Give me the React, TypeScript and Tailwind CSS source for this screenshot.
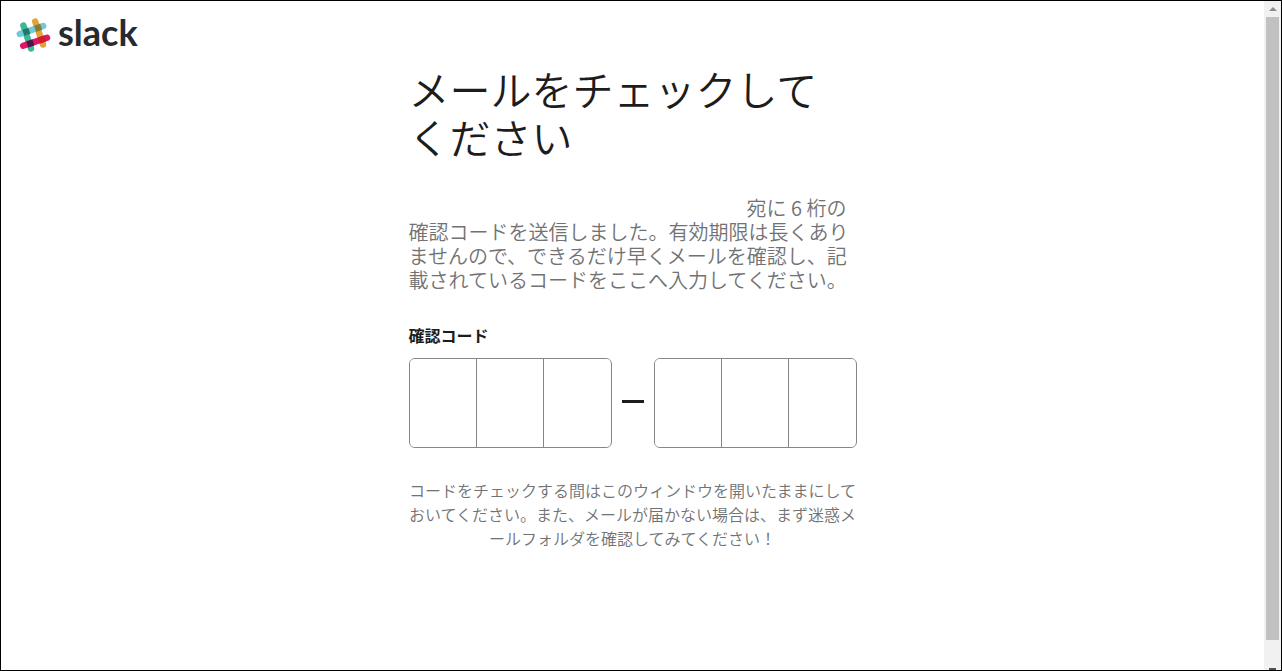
import React from "react";

function SlackMark() {
  return (
    <svg viewBox="0 0 36 38" className="h-[38px] w-9" aria-hidden="true">
      <g strokeWidth="6.4" strokeLinecap="round" fill="none">
        <path d="M7.4 10.5L15 33.5" stroke="#3eb890" />
        <path d="M19.2 6.5L27 29.5" stroke="#e3a336" />
        <path d="M3.8 19L27.2 11" stroke="#70cadb" />
        <path d="M7.2 30.8L31 22.8" stroke="#e01563" />
      </g>
      <path d="M6.2 14.8L12.3 12.7L14.4 18.8L8.3 20.9Z" fill="#1d7c69" />
      <path d="M18 10.8L24.1 8.7L26.2 14.8L20.1 16.9Z" fill="#877e2d" />
      <path d="M10.2 26.5L16.3 24.4L18.4 30.5L12.3 32.6Z" fill="#461b4e" />
      <path d="M22 22.5L28.1 20.4L30.2 26.5L24.1 28.6Z" fill="#cc2027" />
    </svg>
  );
}

function CodeGroup({ start }: { start: number }) {
  return (
    <div className="flex h-[90px] flex-1 divide-x divide-[#868686] overflow-hidden rounded-md border border-[#868686]">
      {[0, 1, 2].map((i) => (
        <input
          key={i}
          id={`code-${start + i}`}
          type="text"
          inputMode="numeric"
          maxLength={1}
          aria-label={`確認コード ${start + i}`}
          className="min-w-0 flex-1 bg-white text-center text-4xl text-[#1d1c1d] outline-none"
        />
      ))}
    </div>
  );
}

function ScrollTrack() {
  return (
    <div className="flex w-[17px] shrink-0 flex-col items-center bg-[#f1f1f1]" aria-hidden="true">
      <div className="flex h-4 items-center">
        <svg viewBox="0 0 8 4" className="h-1 w-2">
          <path d="M4 0L8 4H0Z" fill="#8c8c8c" />
        </svg>
      </div>
      <div className="w-[13px] flex-1 bg-[#c1c1c1]" />
      <div className="flex h-[30px] items-end">
        <div className="h-[2px] w-[7px] bg-[#505050]" />
      </div>
    </div>
  );
}

export default function App() {
  return (
    <div
      lang="ja"
      className="flex min-h-screen border border-black bg-white font-['Lato','Noto_Sans_CJK_JP',sans-serif] text-[#1d1c1d]"
    >
      <div className="min-w-0 flex-1">
        <header className="flex h-[63px] items-center px-[15px] pt-[2px]">
          <a href="#" className="flex items-center gap-[6px] text-[36px] leading-none font-bold text-[#272b2d]">
            <SlackMark />
            <span className="pb-1">slack</span>
          </a>
        </header>
        <main className="mx-auto max-w-[448px] font-['Noto_Sans_CJK_JP',sans-serif] [line-break:anywhere]">
          <h1 className="text-[41px] leading-[48px] font-[350]">
            メールをチェックしてください
          </h1>
          <p className="mt-9 text-xl leading-6 font-[350] text-[#717274]">
            <span className="inline-block w-[338px]" />
            宛に 6 桁の確認コードを送信しました。有効期限は長くありませんので、できるだけ早くメールを確認し、記載されているコードをここへ入力してください。
          </p>
          <label htmlFor="code-1" className="mt-[31px] block text-base leading-6 font-bold">
            確認コード
          </label>
          <div className="mt-[11px] flex items-center">
            <CodeGroup start={1} />
            <div className="flex w-[42px] justify-center pb-1">
              <span className="h-[3px] w-[22px] bg-[#1d1c1d]" />
            </div>
            <CodeGroup start={4} />
          </div>
          <p className="mt-[30px] text-center text-base leading-6 font-[350] text-[#717274]">
            コードをチェックする間はこのウィンドウを開いたままにしておいてください。また、メールが届かない場合は、まず迷惑メールフォルダを確認してみてください！
          </p>
        </main>
      </div>
      <ScrollTrack />
    </div>
  );
}
